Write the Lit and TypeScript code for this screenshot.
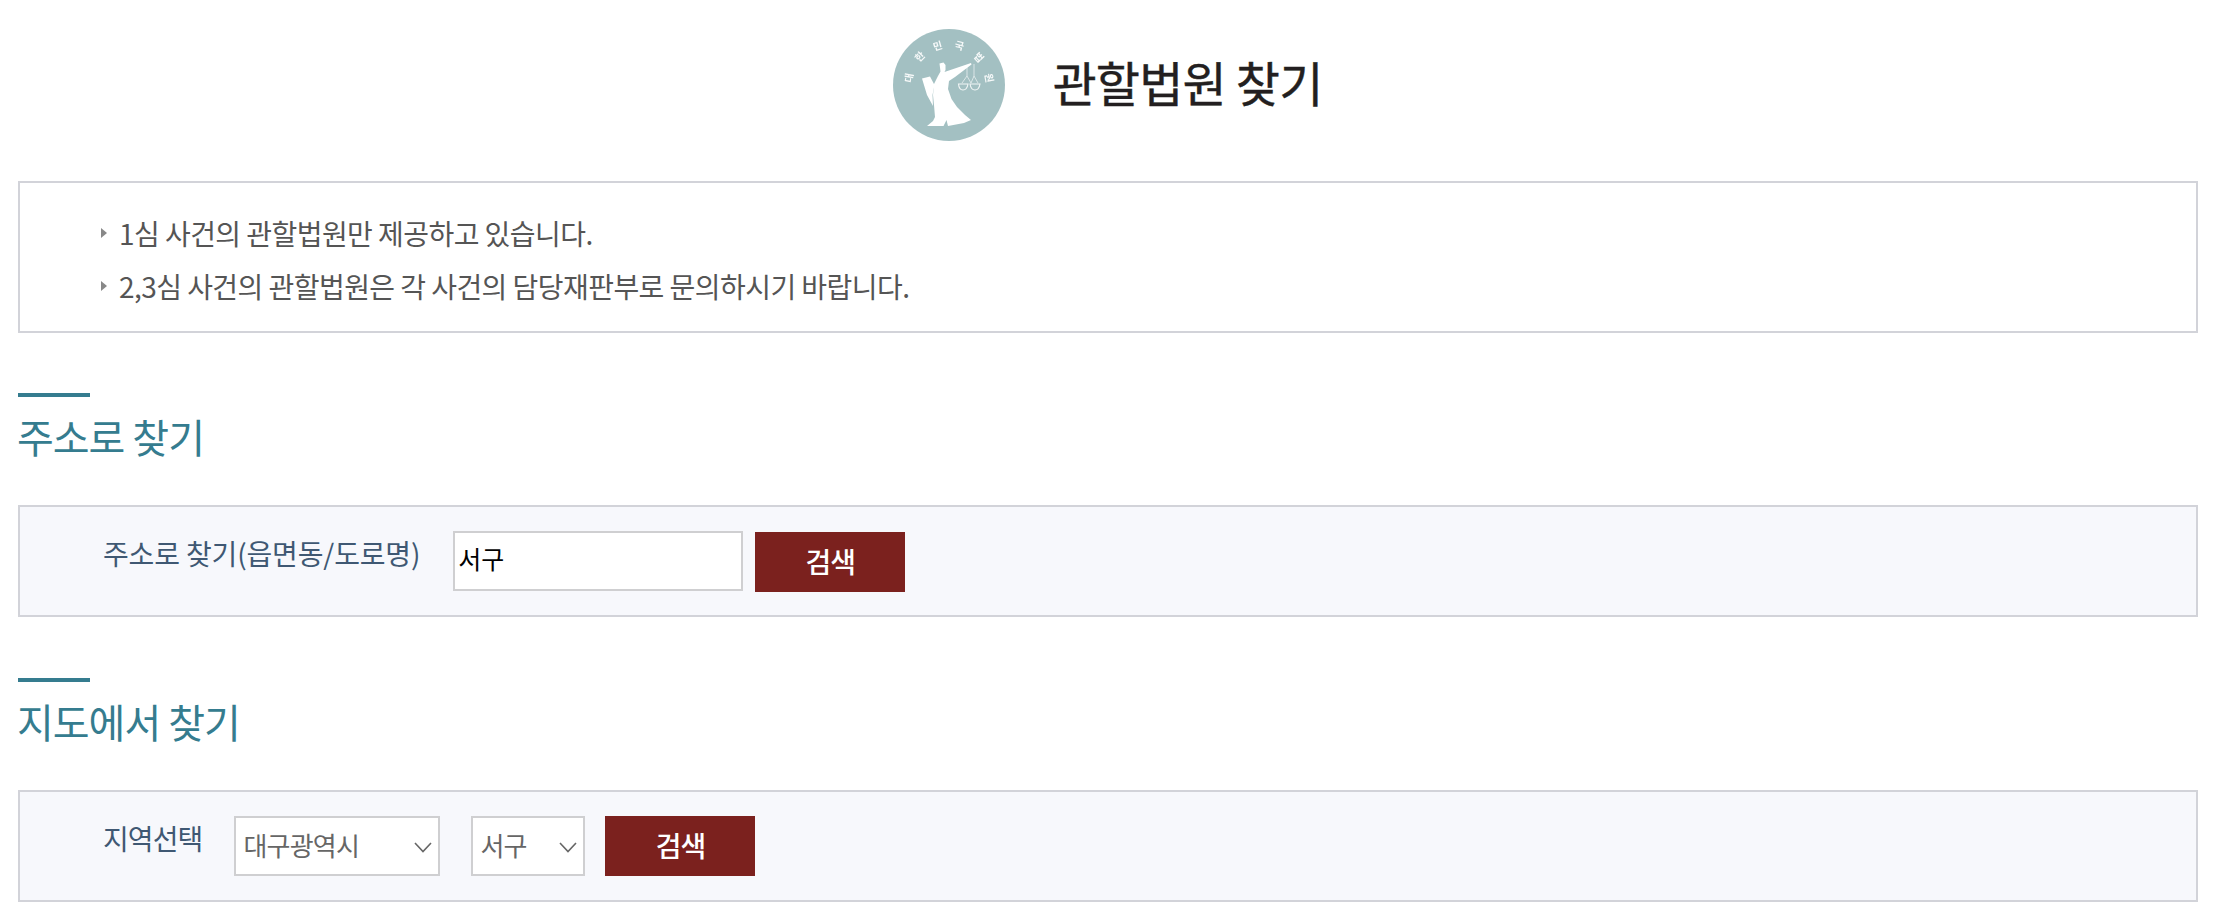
import { LitElement, html, css, svg } from "lit";
import { customElement } from "lit/decorators.js";

const SEAL = "대한민국법원".split("");

@customElement("app-root")
export class AppRoot extends LitElement {
  static styles = css`
    :host {
      display: block;
      width: 2218px;
      height: 914px;
      background: #fff;
      font-family: "Noto Sans CJK KR", "Noto Sans", sans-serif;
      box-sizing: border-box;
      padding: 0 20px 0 18px;
      overflow: hidden;
    }
    * { box-sizing: border-box; }
    .head {
      height: 181px;
      padding-bottom: 12px;
      display: flex;
      align-items: center;
      justify-content: center;
      gap: 47px;
    }
    .seal { width: 112px; height: 112px; display: block; }
    h1 {
      margin: 0 0 7px;
      font-size: 48px;
      line-height: 60px;
      font-weight: 400;
      color: #231f20;
      letter-spacing: -0.8px;
      -webkit-text-stroke: 0.4px #231f20;
    }
    .notice {
      height: 152px;
      border: 2px solid #d2d3d9;
      padding: 23px 0 0 81px;
      margin: 0 0 60px;
      list-style: none;
    }
    .notice li {
      display: flex;
      align-items: center;
      gap: 12px;
      height: 53px;
      font-size: 28px;
      letter-spacing: -0.55px;
      color: #555;
    }
    .tri {
      width: 0;
      height: 0;
      border-left: 6px solid #888;
      border-top: 5px solid transparent;
      border-bottom: 5px solid transparent;
    }
    .section { margin-bottom: 61px; }
    .bar { width: 72px; height: 4px; background: #357c8f; }
    h2 {
      margin: 0 0 0 -1px;
      height: 108px;
      padding-top: 13px;
      font-size: 40px;
      line-height: 52px;
      font-weight: 400;
      letter-spacing: -1px;
      color: #357c8f;
    }
    .panel {
      height: 112px;
      border: 2px solid #d2d3d9;
      background: #f7f8fc;
      display: flex;
      align-items: flex-start;
      padding: 24px 0 0 83px;
    }
    label {
      font-size: 28px;
      line-height: 44px;
      letter-spacing: -0.9px;
      color: #3f5873;
      white-space: nowrap;
    }
    .panel.addr label { margin-right: 33px; letter-spacing: -0.15px; }
    .panel.map label { margin-right: 32px; }
    input {
      width: 290px;
      height: 60px;
      border: 2px solid #cfcfd1;
      background: #fff;
      padding: 0 0 7px 3px;
      font: 400 25px "Noto Sans CJK KR", sans-serif;
      color: #000;
      outline: none;
      margin-right: 12px;
    }
    button {
      width: 150px;
      height: 60px;
      border: 0;
      background: #7b211e;
      color: #fff;
      font: 500 28px "Noto Sans CJK KR", sans-serif;
      letter-spacing: -1px;
      padding: 0 0 2px;
    }
    .addr button { margin-top: 1px; }
    .sel { position: relative; display: block; }
    .sel.city { width: 206px; margin-right: 31px; }
    .sel.gu { width: 114px; margin-right: 20px; }
    select {
      appearance: none;
      -webkit-appearance: none;
      display: block;
      width: 100%;
      height: 60px;
      border: 2px solid #cfcfd1;
      border-radius: 0;
      background: #fff;
      padding: 0 0 4px 7px;
      font: 400 26px "Noto Sans CJK KR", sans-serif;
      letter-spacing: -0.8px;
      color: #666;
      outline: none;
    }
    .chev {
      position: absolute;
      right: 8px;
      top: 26px;
      width: 18px;
      height: 11px;
      pointer-events: none;
    }
  `;

  private chev() {
    return html`<svg class="chev" viewBox="0 0 18 11"><path d="M1 1l8 8.5L17 1" fill="none" stroke="#666" stroke-width="1.6"/></svg>`;
  }

  private seal() {
    const angles = [-80, -46, -16, 15, 47, 80];
    return html`<svg class="seal" viewBox="0 0 112 112">
      <defs><filter id="soft" x="-10%" y="-10%" width="120%" height="120%"><feGaussianBlur stdDeviation="0.5"/></filter></defs>
      <circle cx="56" cy="56" r="56" fill="#a3c0c2"/>
      <g fill="#fff" filter="url(#soft)">
        ${SEAL.map((c, i) => svg`<text x="56" y="19" text-anchor="middle" font-size="10" font-weight="700" font-family="Noto Sans CJK KR" opacity="0.9" transform="rotate(${angles[i]} 56 56)">${c}</text>`)}
        <path d="M46.500 34.500L50.500 33.500L52.500 36L52.500 41L51.500 43L78 34L78.500 35.500L62 48L56 52L55 60L58.500 70L64 78L72 86L78 91L71 94L55 97L53.500 91L50.500 97L34 97L40 92L42 88L41 76L40 66L41 55L45 47L47.500 42.500Z"/>
        <path d="M29 49.500L37 47.500L41.500 56L39.500 66L40 77L34 66Z"/>
      </g>
      <g fill="none" stroke="#fff" stroke-width="0.7" opacity="0.85" filter="url(#soft)">
        <path d="M74 36L74 47M74 47L69 54M74 47L78 54M81 35L81 47M81 47L78 54M81 47L85 54"/>
        <path d="M65.500 55L75 55Q74 61 70 61T65.500 55ZM77 55L87 55Q86 61 82 61T77 55Z" stroke-width="1.1"/>
      </g>
    </svg>`;
  }

  render() {
    return html`
      <header class="head">
        ${this.seal()}
        <h1>관할법원 찾기</h1>
      </header>
      <ul class="notice">
        <li><i class="tri"></i>1심 사건의 관할법원만 제공하고 있습니다.</li>
        <li><i class="tri"></i>2,3심 사건의 관할법원은 각 사건의 담당재판부로 문의하시기 바랍니다.</li>
      </ul>
      <section class="section">
        <div class="bar"></div>
        <h2>주소로 찾기</h2>
        <div class="panel addr">
          <label>주소로 찾기(읍면동/도로명)</label>
          <input type="text" .value=${"서구"} />
          <button>검색</button>
        </div>
      </section>
      <section class="section">
        <div class="bar"></div>
        <h2>지도에서 찾기</h2>
        <div class="panel map">
          <label>지역선택</label>
          <span class="sel city"><select><option>대구광역시</option></select>${this.chev()}</span>
          <span class="sel gu"><select><option>서구</option></select>${this.chev()}</span>
          <button>검색</button>
        </div>
      </section>
    `;
  }
}
